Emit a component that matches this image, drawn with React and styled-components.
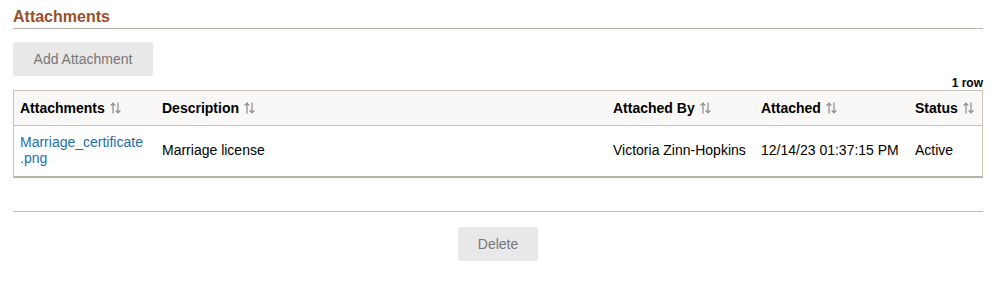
import React from "react";
import styled, { createGlobalStyle } from "styled-components";

const Global = createGlobalStyle`
  html, body { margin: 0; padding: 0; background: #fff; }
  body { font-family: "Liberation Sans", Arial, sans-serif; color: #000; }
`;

const Page = styled.div`
  padding: 0 12px 0 13px;
  width: 970px;
`;

const Title = styled.h2`
  margin: 0;
  padding: 7px 0 1px;
  font-size: 16px;
  line-height: 20px;
  font-weight: bold;
  color: #9b4f2a;
  border-bottom: 1px solid #b8b2ab;
`;

const Button = styled.button`
  display: block;
  margin: ${(p) => p.$margin || "0"};
  width: ${(p) => p.$width}px;
  height: 34px;
  border: none;
  border-radius: 3px;
  background: #e8e8e8;
  color: #777;
  font-family: "Liberation Sans", Arial, sans-serif;
  font-size: 14px;
  padding: 0;
`;

const RowCount = styled.div`
  text-align: right;
  font-size: 12px;
  font-weight: bold;
  line-height: 14px;
`;

const Grid = styled.table`
  width: 970px;
  border-collapse: separate;
  border-spacing: 0;
  table-layout: fixed;
  border: 1px solid #c8c3bd;
  border-bottom: 2px solid #b7b2ac;
`;

const HeadCell = styled.th`
  width: ${(p) => p.$w}px;
  height: 35px;
  padding: 0 6px;
  box-sizing: border-box;
  text-align: left;
  font-size: 14px;
  font-weight: bold;
  background: #f9f8f6;
  border-bottom: 1px solid #c8c3bd;
  white-space: nowrap;
`;

const HeadInner = styled.span`
  display: inline-flex;
  align-items: center;
  gap: 5px;
`;

const Cell = styled.td`
  height: 50px;
  padding: 0 6px 3px;
  box-sizing: border-box;
  font-size: 14px;
  line-height: 16px;
  vertical-align: middle;
  white-space: ${(p) => (p.$wrap ? "normal" : "nowrap")};
`;

const FileLink = styled.a`
  color: #1b6db4;
  text-decoration: none;
`;

const Divider = styled.div`
  margin-top: 33px;
  border-top: 1px solid #bdbdbd;
`;

const Footer = styled.div`
  display: flex;
  justify-content: center;
  padding-top: 15px;
`;

const SortIcon = () => (
  <svg width="11" height="12" viewBox="0 0 11 12" fill="none" stroke="#8a8a8a" strokeWidth="1.2">
    <path d="M3 11.5V1M0.6 3.6L3 1.1L5.4 3.6" />
    <path d="M8 0.5V11M5.6 8.4L8 10.9L10.4 8.4" />
  </svg>
);

const columns = [
  { label: "Attachments", w: 142 },
  { label: "Description", w: 451 },
  { label: "Attached By", w: 148 },
  { label: "Attached", w: 154 },
  { label: "Status", w: 73 },
];

export default function App() {
  return (
    <>
      <Global />
      <Page>
        <Title>Attachments</Title>
        <Button $width={140} $margin="13px 0 0">Add Attachment</Button>
        <RowCount>1 row</RowCount>
        <Grid>
          <thead>
            <tr>
              {columns.map((c) => (
                <HeadCell key={c.label} $w={c.w}>
                  <HeadInner>
                    {c.label}
                    <SortIcon />
                  </HeadInner>
                </HeadCell>
              ))}
            </tr>
          </thead>
          <tbody>
            <tr>
              <Cell $wrap>
                <FileLink href="#">
                  Marriage_certificate<wbr />.png
                </FileLink>
              </Cell>
              <Cell>Marriage license</Cell>
              <Cell>Victoria Zinn-Hopkins</Cell>
              <Cell>12/14/23 01:37:15 PM</Cell>
              <Cell>Active</Cell>
            </tr>
          </tbody>
        </Grid>
        <Divider />
        <Footer>
          <Button $width={80}>Delete</Button>
        </Footer>
      </Page>
    </>
  );
}
